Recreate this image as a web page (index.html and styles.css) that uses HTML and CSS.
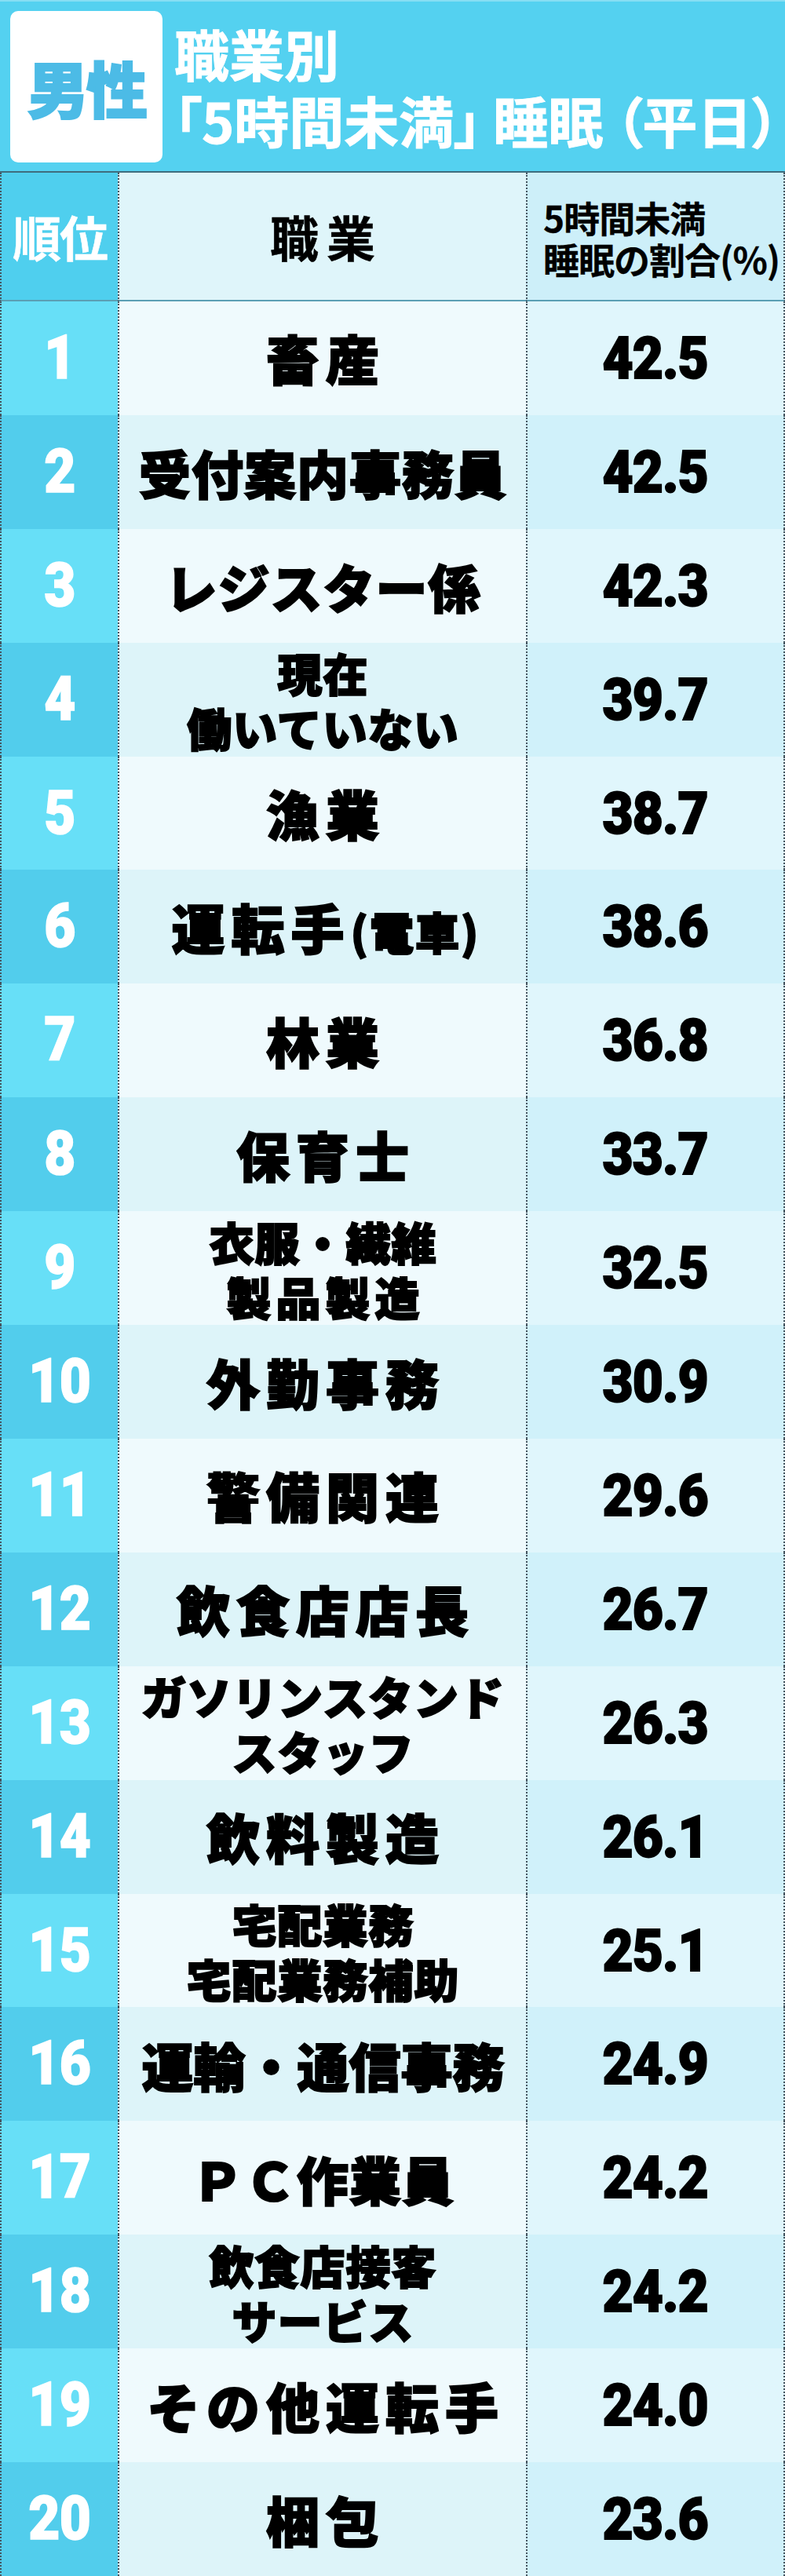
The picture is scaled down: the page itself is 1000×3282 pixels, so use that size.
FILE: index.html
```html
<!DOCTYPE html>
<html lang="ja">
<head>
<meta charset="utf-8">
<title>男性 職業別「5時間未満」睡眠（平日）</title>
<link rel="stylesheet" href="styles.css">
</head>
<body>
<header class="banner">
  <div class="badge">男性</div>
  <h1 class="title"><span class="line">職業別</span><span class="line">「5時間未満」<span class="sp"></span>睡眠<span class="sp"></span>（平日）</span></h1>
</header>
<div class="table">
  <div class="row head">
    <div class="rank"><span class="t">順位</span></div>
    <div class="job"><span class="t">職業</span></div>
    <div class="val"><span class="t">5時間未満<br>睡眠の割合(%)</span></div>
  </div>
  <div class="row odd"><div class="rank"><span class="t">1</span></div><div class="job"><span class="t">畜産</span></div><div class="val"><span class="t">42.5</span></div></div>
  <div class="row even"><div class="rank"><span class="t">2</span></div><div class="job tight"><span class="t">受付案内事務員</span></div><div class="val"><span class="t">42.5</span></div></div>
  <div class="row odd"><div class="rank"><span class="t">3</span></div><div class="job tight"><span class="t">レジスター係</span></div><div class="val"><span class="t">42.3</span></div></div>
  <div class="row even"><div class="rank"><span class="t">4</span></div><div class="job two"><span class="t">現在<br>働いていない</span></div><div class="val"><span class="t">39.7</span></div></div>
  <div class="row odd"><div class="rank"><span class="t">5</span></div><div class="job"><span class="t">漁業</span></div><div class="val"><span class="t">38.7</span></div></div>
  <div class="row even"><div class="rank"><span class="t">6</span></div><div class="job"><span class="t">運転手<span class="small">(電車)</span></span></div><div class="val"><span class="t">38.6</span></div></div>
  <div class="row odd"><div class="rank"><span class="t">7</span></div><div class="job"><span class="t">林業</span></div><div class="val"><span class="t">36.8</span></div></div>
  <div class="row even"><div class="rank"><span class="t">8</span></div><div class="job"><span class="t">保育士</span></div><div class="val"><span class="t">33.7</span></div></div>
  <div class="row odd"><div class="rank"><span class="t">9</span></div><div class="job two"><span class="t">衣服・繊維<br><span class="spaced">製品製造</span></span></div><div class="val"><span class="t">32.5</span></div></div>
  <div class="row even"><div class="rank"><span class="t">10</span></div><div class="job"><span class="t">外勤事務</span></div><div class="val"><span class="t">30.9</span></div></div>
  <div class="row odd"><div class="rank"><span class="t">11</span></div><div class="job"><span class="t">警備関連</span></div><div class="val"><span class="t">29.6</span></div></div>
  <div class="row even"><div class="rank"><span class="t">12</span></div><div class="job"><span class="t">飲食店店長</span></div><div class="val"><span class="t">26.7</span></div></div>
  <div class="row odd"><div class="rank"><span class="t">13</span></div><div class="job two"><span class="t">ガソリンスタンド<br>スタッフ</span></div><div class="val"><span class="t">26.3</span></div></div>
  <div class="row even"><div class="rank"><span class="t">14</span></div><div class="job"><span class="t">飲料製造</span></div><div class="val"><span class="t">26.1</span></div></div>
  <div class="row odd"><div class="rank"><span class="t">15</span></div><div class="job two"><span class="t">宅配業務<br>宅配業務補助</span></div><div class="val"><span class="t">25.1</span></div></div>
  <div class="row even"><div class="rank"><span class="t">16</span></div><div class="job tight seven"><span class="t">運輸・通信事務</span></div><div class="val"><span class="t">24.9</span></div></div>
  <div class="row odd"><div class="rank"><span class="t">17</span></div><div class="job tight"><span class="t">ＰＣ作業員</span></div><div class="val"><span class="t">24.2</span></div></div>
  <div class="row even"><div class="rank"><span class="t">18</span></div><div class="job two"><span class="t">飲食店接客<br>サービス</span></div><div class="val"><span class="t">24.2</span></div></div>
  <div class="row odd"><div class="rank"><span class="t">19</span></div><div class="job"><span class="t">その他運転手</span></div><div class="val"><span class="t">24.0</span></div></div>
  <div class="row even"><div class="rank"><span class="t">20</span></div><div class="job"><span class="t">梱包</span></div><div class="val"><span class="t">23.6</span></div></div>
</div>
</body>
</html>
```
FILE: styles.css
```css
html, body {
  margin: 0;
  padding: 0;
}
body {
  width: 1000px;
  height: 3282px;
  overflow: hidden;
  font-family: "Noto Sans CJK JP", "Noto Sans", sans-serif;
  background: #dff5fb;
}
.banner {
  box-sizing: border-box;
  height: 220px;
  background: #54d1f0;
  border-top: 2px solid #86def4;
  border-bottom: 2px solid #3f6d7e;
  display: flex;
  align-items: flex-start;
  padding: 12px 0 0 13px;
}
.badge {
  width: 194px;
  height: 193px;
  background: #ffffff;
  border-radius: 10px;
  display: flex;
  align-items: center;
  justify-content: center;
  color: #4cbbe6;
  font-size: 78px;
  font-weight: 900;
  letter-spacing: -3px;
  line-height: 1;
  -webkit-text-stroke: 2px #4cbbe6;
}
.title {
  margin: 0 0 0 15px;
  padding-top: 11px;
  color: #ffffff;
  font-size: 70px;
  font-weight: 700;
  line-height: 85px;
  font-feature-settings: "palt";
  white-space: nowrap;
  -webkit-text-stroke: 1px #ffffff;
}
.title .line {
  display: block;
}
.title .sp {
  display: inline-block;
  width: 15px;
}
.table {
  display: grid;
  grid-template-columns: 150px 520px 330px;
  grid-template-rows: 164px repeat(20, 1fr);
  height: 3062px;
}
.row {
  display: contents;
}
.rank, .job, .val {
  display: flex;
  align-items: center;
  justify-content: center;
  box-sizing: border-box;
  text-align: center;
}
.t {
  display: block;
}
.rank {
  border-left: 2px dotted #45545f;
  color: #ffffff;
  font-family: Roboto, "Liberation Sans", sans-serif;
  font-weight: 900;
  font-size: 77px;
  letter-spacing: -1px;
  line-height: 1;
}
.rank .t {
  transform: scaleX(0.9);
  -webkit-text-stroke: 1.5px #ffffff;
}
.job {
  border-left: 2px dotted #45545f;
  color: #000000;
  font-weight: 900;
  font-size: 68px;
  letter-spacing: 8px;
  line-height: 1;
  white-space: nowrap;
}
.job .t {
  -webkit-text-stroke: 2px #000000;
  padding-left: 8px;
}
.job.tight {
  letter-spacing: 1px;
  font-size: 66px;
}
.job.tight .t {
  padding-left: 1px;
}
.job.seven {
  letter-spacing: 0;
}
.job.two {
  font-size: 57px;
  letter-spacing: 1px;
  line-height: 70px;
}
.job.two .t {
  padding-left: 1px;
}
.job .small {
  font-size: 56px;
  letter-spacing: 2px;
  font-feature-settings: "palt";
}
.job .spaced {
  letter-spacing: 6px;
  padding-left: 6px;
}
.val {
  border-left: 2px dotted #45545f;
  border-right: 2px dotted #45545f;
  color: #000000;
  font-family: Roboto, "Liberation Sans", sans-serif;
  font-weight: 900;
  font-size: 75px;
  letter-spacing: -1px;
  line-height: 1;
}
.val .t {
  transform: scaleX(0.9);
  -webkit-text-stroke: 2px #000000;
}
.head .rank, .head .job, .head .val {
  border-bottom: 2px solid #5b9fb4;
}
.head .rank {
  background: #4fcfee;
  font-family: "Noto Sans CJK JP", sans-serif;
  font-weight: 700;
  font-size: 62px;
  letter-spacing: -2px;
}
.head .rank .t {
  transform: none;
  -webkit-text-stroke: 0.5px #ffffff;
}
.head .job {
  background: #dff5fa;
  font-weight: 700;
  font-size: 62px;
  letter-spacing: 10px;
}
.head .job .t {
  -webkit-text-stroke: 0.5px #000000;
  padding-left: 10px;
}
.head .val {
  background: #cdeff9;
  font-family: "Noto Sans CJK JP", sans-serif;
  font-weight: 700;
  font-size: 46px;
  line-height: 53px;
  letter-spacing: -1px;
  text-align: left;
  justify-content: flex-start;
  padding-left: 20px;
  padding-top: 4px;
  white-space: nowrap;
}
.head .val .t {
  transform: none;
  -webkit-text-stroke: 0.3px #000000;
}
.odd .rank { background: #67dff7; }
.odd .job { background: #effafd; }
.odd .val { background: #e0f6fc; }
.even .rank { background: #52cdec; }
.even .job { background: #ddf4f9; }
.even .val { background: #d0f1fa; }
```
